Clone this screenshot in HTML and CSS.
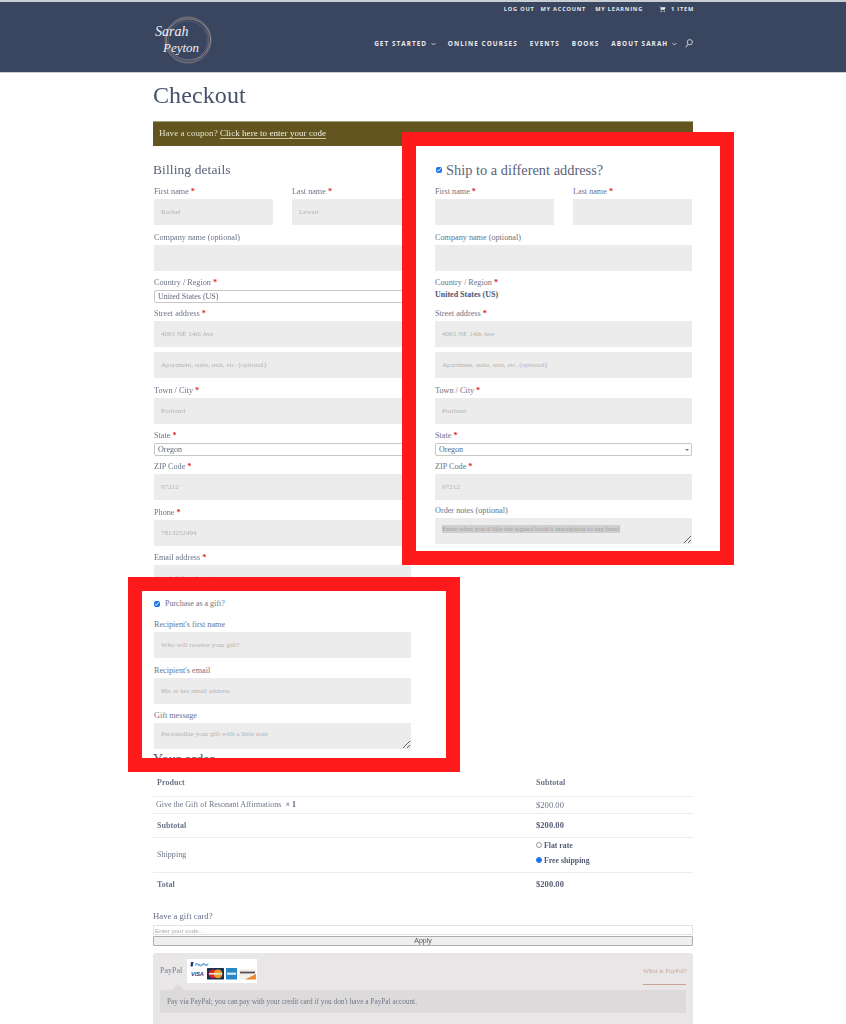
FILE: index.html
```html
<!DOCTYPE html>
<html lang="en">
<head>
<meta charset="utf-8">
<title>Checkout</title>
<link rel="stylesheet" href="styles.css">
</head>
<body>
<div class="page">
  <header class="site-header">
    <div class="header-inner">
      <a class="logo" href="#">
        <svg width="62" height="54" viewBox="0 0 62 54" aria-label="Sarah Peyton logo">
          <g fill="none" stroke-width=".6">
            <circle cx="35" cy="26" r="23" stroke="#a58f8a"/>
            <ellipse cx="34.5" cy="26" rx="21.5" ry="22" stroke="#7f808f"/>
            <ellipse cx="35.5" cy="25.5" rx="22" ry="20.5" stroke="#b39a90"/>
            <circle cx="35" cy="26.5" r="19.5" stroke="#646a7e"/>
          </g>
          <text class="logo-text" x="2" y="22">Sarah</text>
          <text class="logo-text logo-text-small" x="10" y="38">Peyton</text>
        </svg>
      </a>
      <div class="header-nav">
        <nav class="top-nav">
          <a href="#">LOG OUT</a>
          <a href="#">MY ACCOUNT</a>
          <a class="learning" href="#">MY LEARNING</a>
          <a class="cart" href="#">
            <svg width="7" height="6" viewBox="0 0 7 6"><path d="M0 .4h1.2l.5 3.4h4L6.6 1.2H1.6z" fill="#e8eaef"/><circle cx="2.3" cy="5.2" r=".7" fill="#e8eaef"/><circle cx="5.2" cy="5.2" r=".7" fill="#e8eaef"/></svg>
            1 ITEM
          </a>
        </nav>
        <nav class="main-nav">
          <a href="#">GET STARTED <svg class="chev" width="5" height="4" viewBox="0 0 5 4"><path d="M.5 1l2 2 2-2" fill="none" stroke="#e8eaef" stroke-width=".8"/></svg></a>
          <a href="#">ONLINE COURSES</a>
          <a href="#">EVENTS</a>
          <a href="#">BOOKS</a>
          <a href="#">ABOUT SARAH <svg class="chev" width="5" height="4" viewBox="0 0 5 4"><path d="M.5 1l2 2 2-2" fill="none" stroke="#e8eaef" stroke-width=".8"/></svg></a>
          <svg class="search" width="8" height="9" viewBox="0 0 8 9"><circle cx="4.8" cy="3.2" r="2.6" fill="none" stroke="#e8eaef" stroke-width=".8"/><path d="M3.1 5.2L.8 8.3" stroke="#e8eaef" stroke-width=".9"/></svg>
        </nav>
      </div>
    </div>
  </header>

  <main class="content">
    <h1 class="page-title">Checkout</h1>
    <div class="coupon">Have a coupon? <a href="#">Click here to enter your code</a></div>

    <section class="billing">
      <h3 class="section-title">Billing details</h3>
      <div class="name-row">
        <div class="field"><label>First name <em>*</em></label><input placeholder="Rachel"></div>
        <div class="field"><label>Last name <em>*</em></label><input placeholder="Lewett"></div>
      </div>
      <div class="field"><label>Company name (optional)</label><input></div>
      <div class="field field-select"><label>Country / Region <em>*</em></label><select><option>United States (US)</option></select></div>
      <div class="field"><label>Street address <em>*</em></label><input placeholder="4065 NE 14th Ave"><input class="second" placeholder="Apartment, suite, unit, etc. (optional)"></div>
      <div class="field"><label>Town / City <em>*</em></label><input placeholder="Portland"></div>
      <div class="field field-select"><label>State <em>*</em></label><select><option>Oregon</option></select></div>
      <div class="field"><label>ZIP Code <em>*</em></label><input placeholder="97212"></div>
      <div class="field"><label>Phone <em>*</em></label><input placeholder="7813252494"></div>
      <div class="field"><label>Email address <em>*</em></label><input placeholder="rachel@sarahpeyton.com"></div>
    </section>

    <section class="order">
      <table class="order-table">
        <thead>
          <tr class="r-head"><th>Product</th><th>Subtotal</th></tr>
        </thead>
        <tbody>
          <tr class="r-item"><td>Give the Gift of Resonant Affirmations &nbsp;<strong>× 1</strong></td><td class="price">$200.00</td></tr>
          <tr class="r-sub"><th>Subtotal</th><td class="price"><strong>$200.00</strong></td></tr>
          <tr class="r-ship"><th class="light">Shipping</th><td class="ship-cell">
            <div class="ship-opt"><input type="radio" name="ship"><strong>Flat rate</strong></div>
            <div class="ship-opt"><input type="radio" name="ship" checked><strong>Free shipping</strong></div>
          </td></tr>
          <tr class="r-total"><th>Total</th><td class="price"><strong>$200.00</strong></td></tr>
        </tbody>
      </table>
    </section>

    <section class="gift-card">
      <h4>Have a gift card?</h4>
      <input class="gift-code" placeholder="Enter your code...">
      <button class="apply" type="button">Apply</button>
    </section>

    <section class="payment">
      <div class="pay-head">
        <span class="pay-name">PayPal</span>
        <svg class="pay-cards" width="70" height="24" viewBox="0 0 70 24">
          <rect width="70" height="24" fill="#fff"/>
          <text class="pp-text" x="8" y="7">PayPal</text>
          <path d="M4 3h2.5l-.8 4.5H3.5z" fill="#17357c"/>
          <text class="visa" x="4" y="16.5">VISA</text>
          <rect x="20" y="9" width="17" height="11.5" rx=".5" fill="#1c2f55"/>
          <circle cx="26" cy="14.8" r="4.4" fill="#d8232a"/>
          <circle cx="31" cy="14.8" r="4.4" fill="#ee9d25"/>
          <rect x="22" y="14" width="13" height="1.6" fill="#e9e2d8"/>
          <rect x="39" y="9" width="11" height="11.5" fill="#2b86c6"/>
          <rect x="40" y="13.6" width="9" height="2.2" fill="#d6e8f4"/>
          <rect x="52" y="10" width="17" height="10.5" fill="#f3f1ee"/>
          <path d="M58 20.5L69 15v5.5z" fill="#ec8a2c"/>
          <rect x="53" y="12.6" width="15" height="1.8" fill="#55504c"/>
        </svg>
        <a class="what" href="#">What is PayPal?</a>
      </div>
      <div class="pay-box">Pay via PayPal; you can pay with your credit card if you don't have a PayPal account.</div>
    </section>
  </main>

  <aside class="callout callout-ship">
    <h3 class="ship-title"><input type="checkbox" checked>Ship to a different address?</h3>
    <div class="name-row">
      <div class="field"><label>First name <em>*</em></label><input></div>
      <div class="field"><label>Last name <em>*</em></label><input></div>
    </div>
    <div class="field"><label>Company name (optional)</label><input></div>
    <div class="field field-static"><label>Country / Region <em>*</em></label><strong>United States (US)</strong></div>
    <div class="field"><label>Street address <em>*</em></label><input placeholder="4065 NE 14th Ave"><input class="second" placeholder="Apartment, suite, unit, etc. (optional)"></div>
    <div class="field"><label>Town / City <em>*</em></label><input placeholder="Portland"></div>
    <div class="field field-select"><label>State <em>*</em></label><select><option>Oregon</option></select></div>
    <div class="field field-tight"><label>ZIP Code <em>*</em></label><input placeholder="97212"></div>
    <div class="field"><label>Order notes (optional)</label><div class="notes"><span>Enter what you'd like the signed book's inscription to say here!</span></div></div>
  </aside>

  <aside class="callout callout-gift">
    <div class="gift-check"><input type="checkbox" checked><span>Purchase as a gift?</span></div>
    <div class="field"><label>Recipient's first name</label><input placeholder="Who will receive your gift?"></div>
    <div class="field"><label>Recipient's email</label><input placeholder="His or her email address"></div>
    <div class="field field-last"><label>Gift message</label><textarea placeholder="Personalize your gift with a little note"></textarea></div>
    <h3 class="section-title order-title">Your order</h3>
  </aside>
</div>
</body>
</html>
```

FILE: styles.css
```css
* { box-sizing: border-box; }
html, body { margin: 0; padding: 0; background: #fff; }
body { font-family: "Liberation Serif", "Times New Roman", serif; color: #6d7488; }
.page { position: relative; width: 846px; height: 1024px; overflow: hidden; opacity: .999; }
a { color: inherit; text-decoration: none; }

/* header */
.site-header { height: 73px; background: #3a465f; border-top: 2px solid #c9cdd4; border-bottom: 1px solid #c9cdd4; }
.header-inner { width: 540px; height: 70px; margin: 0 auto; display: flex; justify-content: space-between; }
.logo { display: block; margin-top: 12px; height: 54px; }
.logo-text { font: italic 14px "Liberation Serif", serif; fill: #eef0f2; }
.logo-text-small { font-size: 13px; }
.header-nav { display: flex; flex-direction: column; align-items: flex-end; font-family: "Open Sans", sans-serif; font-weight: 700; color: #e8eaef; }
.top-nav { display: flex; align-items: center; gap: 6px; height: 13px; margin-right: -1px; font-size: 5.6px; letter-spacing: .8px; }
.top-nav .learning { margin-left: 3px; }
.top-nav .cart { margin-left: 10px; display: flex; align-items: center; gap: 5px; }
.main-nav { display: flex; align-items: center; gap: 12px; margin-top: 21px; height: 14px; font-size: 6.4px; letter-spacing: 1.05px; white-space: nowrap; }
.chev { margin-left: 1px; vertical-align: middle; }
.search { margin-left: -4px; }

/* main */
.content { width: 540px; margin: 0 auto; }
.page-title { margin: 0; padding-top: 7px; height: 48px; font-size: 24px; line-height: 30px; font-weight: 400; color: #47516b; letter-spacing: .1px; }
.coupon { height: 25px; background: #62551f; border-top: 1px solid #a69e80; color: #e4dfc9; font-size: 9px; line-height: 22px; padding-left: 6px; letter-spacing: .05px; }
.coupon a { border-bottom: 1px solid #c9c3a6; color: #f1eedf; }
.section-title { margin: 0; font-size: 13.5px; line-height: 18px; font-weight: 400; color: #5b6378; letter-spacing: .1px; }
.billing { width: 258px; padding-left: 1px; margin-top: 15px; }
.billing .section-title { margin-left: -1px; height: 24px; }

/* form fields */
.field { margin-bottom: 5.5px; }
.field label { display: block; height: 14px; font-size: 8.2px; line-height: 13px; color: #6d7488; }
.field em { color: #e11d1d; font-style: normal; font-weight: 700; }
.field input, .field textarea, .notes { display: block; width: 100%; height: 26px; border: 0; margin: 0; padding: 0 7px; background: #ececec; font: 7.1px "Liberation Serif", serif; color: #888; border-radius: 0; }
.field input::placeholder, .field textarea::placeholder { color: #b2b2b4; opacity: 1; }
.field .second { margin-top: 5px; }
.field textarea { padding: 7px; resize: vertical; }
.name-row { display: flex; gap: 19px; }
.name-row .field { flex: 1 1 0; min-width: 0; }
.field select { display: block; width: 100%; height: 13px; padding: 0 3px; margin: 0; border: 1px solid #c7c7c7; border-radius: 2px; color: #5f6679; font: 8px "Liberation Serif", serif; appearance: none; background: #fff; }
.field-select { position: relative; margin-bottom: 4px; }
.field-select::after { content: ""; position: absolute; right: 3px; top: 20px; border: 2px solid transparent; border-bottom: 0; border-top: 2px solid #777; }
.field-static { margin-bottom: 5px; }
.field-static strong { display: block; height: 12px; font-size: 8px; line-height: 9px; color: #4d556c; }
.field-tight { margin-bottom: 4px; }
.notes { padding: 6px 7px; resize: vertical; overflow: hidden; color: #a3a3a5; line-height: 10px; white-space: nowrap; }
.notes span { background: #cfcfcf; }

/* overlay callouts */
.callout { position: absolute; background: #fff; border: 14.5px solid #fe1a1a; }
.callout > * { opacity: .999; }
.callout-ship { left: 402px; top: 132px; width: 332px; height: 433px; padding: 14px 28px 0 19px; }
.callout-gift { left: 128px; top: 577px; width: 332px; height: 195px; padding: 7px 35px 0 12px; overflow: hidden; }
.ship-title { margin: 0 0 6px; height: 19px; display: flex; align-items: center; font-size: 14.4px; line-height: 18px; font-weight: 400; color: #5b6378; }
.callout input[type="checkbox"] { width: 6px; height: 6px; margin: 0 4px 0 1px; accent-color: #1a73e8; flex: none; }
.gift-check { display: flex; align-items: center; height: 11px; margin-bottom: 9px; font-size: 8px; }
.gift-check input[type="checkbox"] { margin: 0 5px 0 0; }
.field-last { margin-bottom: 2px; }
.order-title { margin-left: -1px; font-size: 14px; color: #4f576e; white-space: nowrap; }

/* order */
.order { margin-top: 178px; }
.order-table { width: 100%; border-collapse: collapse; font-size: 8px; color: #70778a; }
.order-table th, .order-table td { padding: 0; border-bottom: 1px solid #ececec; text-align: left; vertical-align: middle; font-weight: 400; }
.order-table tr > :first-child { width: 383px; padding-left: 4px; }
.order-table th { font-weight: 700; color: #6d7488; letter-spacing: .05px; }
.order-table th.light { font-weight: 400; }
.order-table strong { color: #565d74; }
.order-table .price { font-size: 8.5px; letter-spacing: .05px; }
.r-head { height: 27px; }
.r-head th { padding-top: 1px; }
.r-item { height: 17px; }
.r-item td:first-child { padding-left: 3px; }
.r-sub { height: 24px; }
.r-ship { height: 35px; }
.r-total { height: 24px; }
.order-table .r-total > * { border-bottom: 0; }
.order-table .ship-cell { padding-bottom: 4px; }
.ship-opt { display: flex; align-items: center; height: 15px; font-size: 7.8px; }
.ship-opt input { appearance: none; width: 6px; height: 6px; margin: 0 2px 0 0; border: .5px solid #999; border-radius: 50%; background: #fff; flex: none; }
.ship-opt input:checked { background: radial-gradient(circle, #1a73e8 0 1.8px, #cfe0f8 2.4px); border-color: #1a73e8; }

/* gift card */
.gift-card { margin-top: 14px; }
.gift-card h4 { margin: 0; height: 15px; font-size: 8.7px; line-height: 12px; font-weight: 400; color: #69708a; }
.gift-code { display: block; width: 100%; height: 10px; padding: 0 1px; margin: 0; border: 1px solid #e3e3e3; background: #fff; font: 6.2px "Liberation Sans", sans-serif; }
.gift-code::placeholder { color: #a9a9a9; opacity: 1; }
.apply { display: block; width: 100%; height: 10px; margin: 1px 0 0; padding: 0; border: 1px solid #adadad; border-radius: 1px; background: #efefef; color: #555; font: 7px/8px "Liberation Sans", sans-serif; }

/* payment */
.payment { margin-top: 7px; height: 110px; padding: 6px 7px 0 7px; border-radius: 3px;
  background: repeating-conic-gradient(#ebe9e9 0 25%, #e6e4e4 0 50%) 0 0 / 2px 2px;
}
.pay-head { position: relative; display: flex; align-items: flex-start; height: 31px; }
.pay-head::after { content: ""; position: absolute; left: 12px; bottom: 0; border: 6px solid transparent; border-top: 0; border-bottom-color: #dcdada; }
.pay-name { font-size: 8px; line-height: 24px; color: #7a7f90; margin-right: 5px; }
.pay-cards { display: block; flex: none; }
.pp-text { font: italic 700 4px "Liberation Sans", sans-serif; fill: #2a86c8; }
.visa { font: italic 700 5.5px "Liberation Sans", sans-serif; fill: #1b3a7d; }
.what { margin-left: auto; width: 43px; height: 26px; line-height: 24px; font-size: 6.7px; white-space: nowrap; color: #c8a79b; border-bottom: 1px solid #c9a390; }
.pay-box { height: 23px; padding-left: 7px; background: #dcdada; font-size: 7.3px; line-height: 23px; color: #70778a; }
```
